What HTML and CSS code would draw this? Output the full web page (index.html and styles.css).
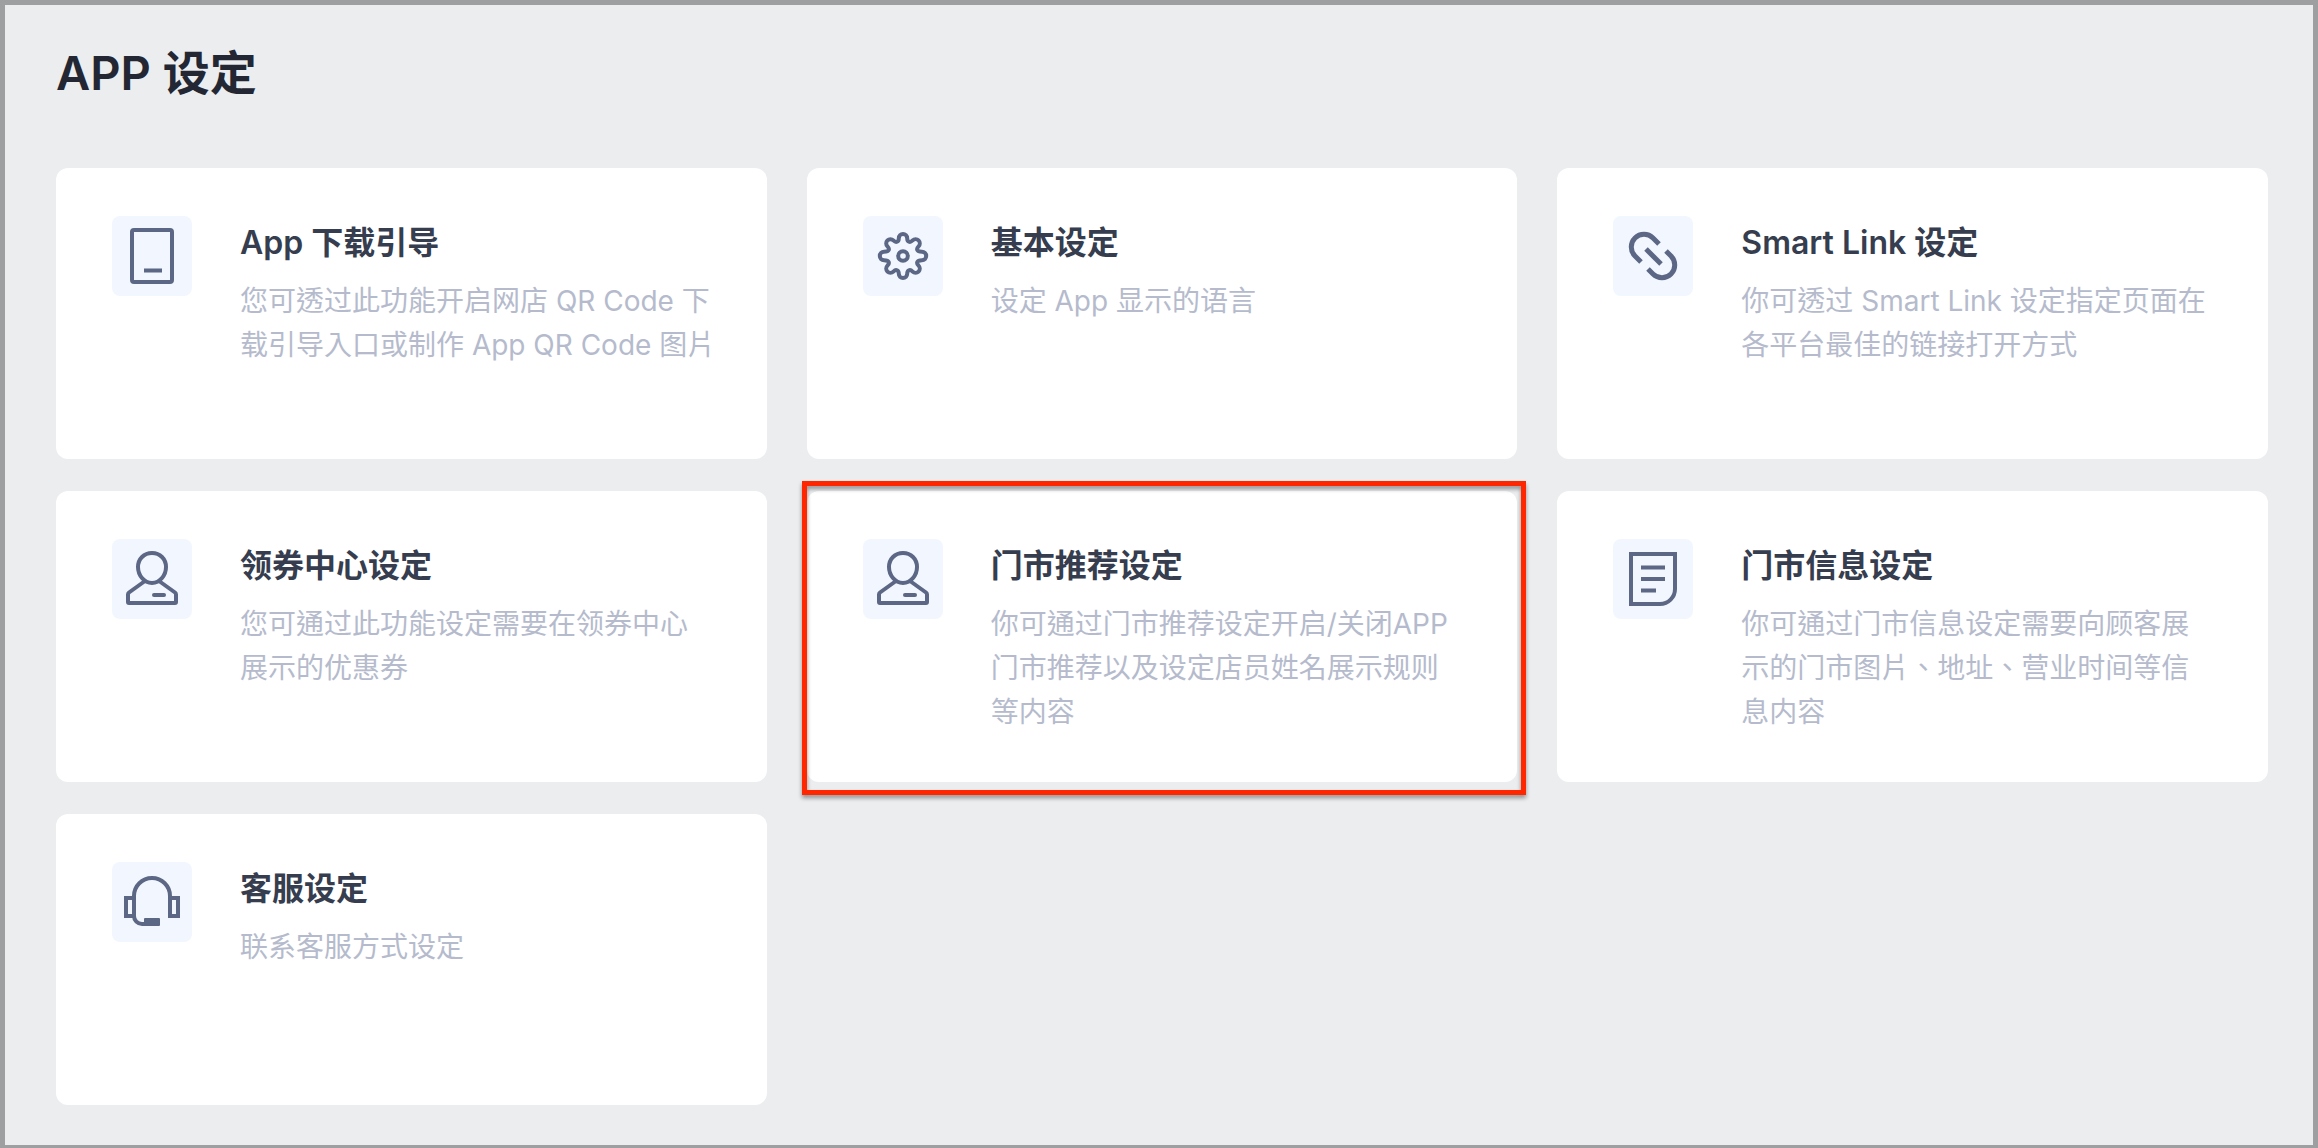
FILE: index.html
```
<!DOCTYPE html>
<html lang="zh-Hant">
<head>
<meta charset="UTF-8" />
<meta name="viewport" content="width=device-width, initial-scale=1" />
<title>APP 设定</title>
<link rel="stylesheet" href="styles.css">
</head>
<body>

<main class="page">
  <h1 class="page-title">APP 设定</h1>

  <div class="card-grid">
    <a href="#app-download" class="card">
      <svg class="card-icon" viewBox="0 0 80 80" aria-hidden="true">
        <rect x="20" y="14" width="40" height="52" rx="2" />
        <path d="M32 54.5h18" />
      </svg>
      <div class="card-text">
        <h2>App 下载引导</h2>
        <p>您可透过此功能开启网店 QR Code 下<br>载引导入口或制作 App QR Code 图片</p>
      </div>
    </a>

    <a href="#basic" class="card">
      <svg class="card-icon" viewBox="0 0 80 80" aria-hidden="true">
        <path transform="translate(40 40)" d="M-5.9 -14.3Q-4.2 -15 -4.2 -17.8A4.2 4.2 0 0 1 4.2 -17.8Q4.2 -15 5.9 -14.3Q7.64 -13.58 9.62 -15.56A4.2 4.2 0 0 1 15.56 -9.62Q13.58 -7.64 14.3 -5.9Q15 -4.2 19 -4.2A4.2 4.2 0 0 1 19 4.2Q15 4.2 14.3 5.9Q13.58 7.64 15.56 9.62A4.2 4.2 0 0 1 9.62 15.56Q7.64 13.58 5.9 14.3Q4.2 15 4.2 17.8A4.2 4.2 0 0 1 -4.2 17.8Q-4.2 15 -5.9 14.3Q-7.64 13.58 -9.62 15.56A4.2 4.2 0 0 1 -15.56 9.62Q-13.58 7.64 -14.3 5.9Q-15 4.2 -19 4.2A4.2 4.2 0 0 1 -19 -4.2Q-15 -4.2 -14.3 -5.9Q-13.58 -7.64 -15.56 -9.62A4.2 4.2 0 0 1 -9.62 -15.56Q-7.64 -13.58 -5.9 -14.3Z" />
        <circle cx="40" cy="40" r="4.8" />
      </svg>
      <div class="card-text">
        <h2>基本设定</h2>
        <p>设定 App 显示的语言</p>
      </div>
    </a>

    <a href="#smart-link" class="card">
      <svg class="card-icon icon-link" viewBox="0 0 80 80" aria-hidden="true">
        <path d="M28 46L22 40A12.7 12.7 0 0 1 40 22L46 28" />
        <path d="M53 35L58 40A12.7 12.7 0 0 1 40 58L35 53" />
        <path d="M33 33L48 48" />
      </svg>
      <div class="card-text">
        <h2>Smart Link 设定</h2>
        <p>你可透过 Smart Link 设定指定页面在<br>各平台最佳的链接打开方式</p>
      </div>
    </a>

    <a href="#coupon-center" class="card">
      <svg class="card-icon" viewBox="0 0 80 80" aria-hidden="true">
        <path d="M40 14C48 14 54 20 54 28C54 36 48 44 40 44C32 44 26 36 26 28C26 20 32 14 40 14Z" />
        <path d="M33 42L17 53.5Q16 54.3 16 55.5V63Q16 64 17 64H63Q64 64 64 63V55.5Q64 54.3 63 53.5L47 42" />
        <path d="M42 56h10" stroke-linecap="round" />
      </svg>
      <div class="card-text">
        <h2>领券中心设定</h2>
        <p>您可通过此功能设定需要在领券中心<br>展示的优惠券</p>
      </div>
    </a>

    <a href="#store-recommend" class="card highlighted">
      <svg class="card-icon" viewBox="0 0 80 80" aria-hidden="true">
        <path d="M40 14C48 14 54 20 54 28C54 36 48 44 40 44C32 44 26 36 26 28C26 20 32 14 40 14Z" />
        <path d="M33 42L17 53.5Q16 54.3 16 55.5V63Q16 64 17 64H63Q64 64 64 63V55.5Q64 54.3 63 53.5L47 42" />
        <path d="M42 56h10" stroke-linecap="round" />
      </svg>
      <div class="card-text">
        <h2>门市推荐设定</h2>
        <p>你可通过门市推荐设定开启/关闭APP<br>门市推荐以及设定店员姓名展示规则<br>等内容</p>
      </div>
    </a>

    <a href="#store-info" class="card">
      <svg class="card-icon" viewBox="0 0 80 80" aria-hidden="true">
        <path d="M18 15H62V50A15 15 0 0 1 47 65H18Z" />
        <path d="M28 28.5h24M28 40h24M28 51.5h15" />
      </svg>
      <div class="card-text">
        <h2>门市信息设定</h2>
        <p>你可通过门市信息设定需要向顾客展<br>示的门市图片、地址、营业时间等信<br>息内容</p>
      </div>
    </a>

    <a href="#customer-service" class="card">
      <svg class="card-icon" viewBox="0 0 80 80" aria-hidden="true">
        <path d="M58 36V34A18 18 0 0 0 22 34V54A8 8 0 0 0 30 62H34" />
        <path d="M14 36H22V54H14ZM58 36H66V54H58Z" />
        <rect class="mic" x="32" y="56" width="16" height="8" rx="1" />
      </svg>
      <div class="card-text">
        <h2>客服设定</h2>
        <p>联系客服方式设定</p>
      </div>
    </a>
  </div>
</main>

</body>
</html>
```
FILE: styles.css
```
* {
  box-sizing: border-box;
}

body {
  margin: 0;
  min-height: 100vh;
  border: 5px solid #9e9fa1;
  border-bottom-width: 3px;
  background-color: #ebedef;
  font-family: Inter, "Noto Sans CJK TC", sans-serif;
}

.page {
  padding: 32px 45px 40px 51px;
}

.page-title {
  margin: 0 0 59px;
  font-size: 47px;
  line-height: 72px;
  font-weight: 600;
  color: #232733;
}

.card-grid {
  display: grid;
  grid-template-columns: repeat(3, 1fr);
  grid-auto-rows: minmax(291px, auto);
  gap: 32px 40px;
}

.card {
  position: relative;
  display: flex;
  align-items: flex-start;
  gap: 48px;
  padding: 48px 48px 40px 56px;
  background-color: #fff;
  border-radius: 12px;
  text-decoration: none;
}

/* red frame over the selected card */
.highlighted::after {
  content: "";
  position: absolute;
  top: -10px;
  right: -9px;
  bottom: -13px;
  left: -5px;
  border: 5px solid #ff2600;
  filter: drop-shadow(0 3px 2px rgba(0, 0, 0, 0.4));
  pointer-events: none;
}

.card-icon {
  flex: none;
  width: 80px;
  height: 80px;
  border-radius: 8px;
  background-color: #f1f6ff;
  fill: none;
  stroke: #5b6784;
  stroke-width: 4;
}

.icon-link { stroke-width: 5; }
.mic { fill: #5b6784; stroke: none; }

.card-text {
  flex: 1;
  min-width: 0;
}

.card-text h2 {
  margin: 0 0 9px;
  font-size: 32px;
  line-height: 54px;
  font-weight: 600;
  color: #353d4e;
}

.card-text p {
  margin: 0;
  font-size: 28px;
  line-height: 44px;
  color: #b5bbcc;
}
```
